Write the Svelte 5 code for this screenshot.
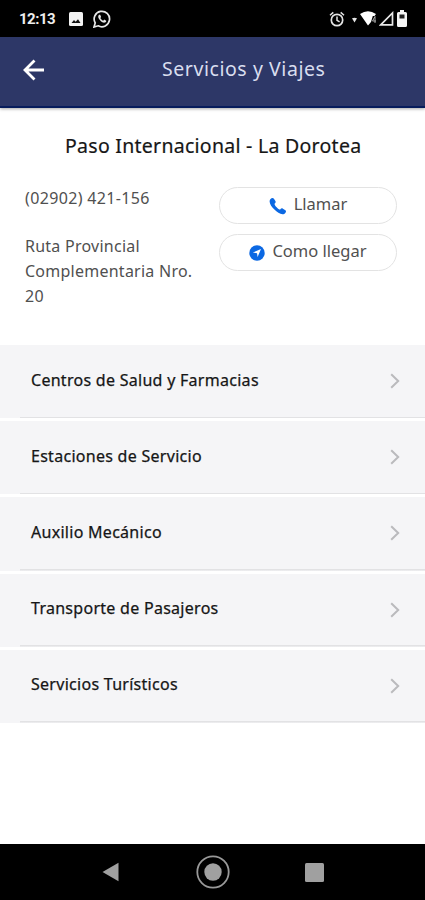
<script lang="ts">
  const services: string[] = [
    'Centros de Salud y Farmacias',
    'Estaciones de Servicio',
    'Auxilio Mecánico',
    'Transporte de Pasajeros',
    'Servicios Turísticos'
  ];
</script>

<div class="screen">
  <div class="status-bar">
    <span class="clock">12:13</span>
    <svg class="picture" width="14" height="14" viewBox="0 0 14 14" aria-hidden="true">
      <rect width="14" height="14" rx="1.5" fill="#f2f2f2" />
      <path d="M2.500 11 5 8 6.600 9.800 9 7.200 11.500 11Z" fill="#111" />
    </svg>
    <svg class="whatsapp" width="18" height="18" viewBox="0 0 18 18" aria-hidden="true">
      <path d="M1 17 2.200 12.900A7.700 7.700 0 1 1 5.200 15.800Z" fill="none" stroke="#e8e8e8" stroke-width="1.700" />
      <path d="M6.100 4.700c-1.400 1-1.100 3 .5 5s3.700 3.400 5.300 2.900c1.100-.4 1.500-1.200 1.300-1.900L11.200 9.600l-1 1.100C8.800 10.200 7.900 9.200 7.300 8l.8-1-.9-2.200Z" fill="#e8e8e8" />
    </svg>
    <div class="indicators">
      <svg width="16" height="16" viewBox="0 0 16 16" fill="none" stroke="#e4e4e4" aria-hidden="true">
        <circle cx="8" cy="9" r="5.700" stroke-width="1.700" />
        <path d="M1 4.200 4.300 1.400M15 4.200 11.700 1.400M8 5.500V9.300L10.600 10.900" stroke-width="1.500" />
      </svg>
      <svg class="small-signal" width="5" height="6" viewBox="0 0 6 6" aria-hidden="true">
        <path d="M0 1Q3-.5 6 1L3 6Z" fill="#e4e4e4" />
      </svg>
      <svg class="wifi" width="17" height="15" viewBox="0 0 17 15" aria-hidden="true">
        <path d="M0 3Q8-2.500 16 3L14.500 5H12.800L11 11 8 14.500Z" fill="#fff" />
        <path d="M15 5.500 12.500 10H16M15 5.500V12" fill="none" stroke="#aaa" />
      </svg>
      <svg class="cell" width="15" height="15" viewBox="0 0 15 15" aria-hidden="true">
        <path d="M1.700 13.800 13.500 2V13.800Z" fill="none" stroke="#e8e8e8" stroke-width="1.700" />
      </svg>
      <svg class="battery" width="10" height="17" viewBox="0 0 10 17" aria-hidden="true">
        <path d="M3 0H7V2H8.500Q10 2 10 3.500V15.500Q10 17 8.500 17H1.500Q0 17 0 15.500V3.500Q0 2 1.500 2H3Z" fill="#f5f5f5" />
        <path d="M2.500 4.500H7.500V8.500H2.500Z" fill="#222" />
      </svg>
    </div>
  </div>

  <header class="toolbar">
    <button type="button" class="back" aria-label="Volver">
      <svg width="22" height="22" viewBox="0 0 22 22" aria-hidden="true">
        <path d="M11.500 1.500 2 11 11.500 20.500M2 11H21" fill="none" stroke="#fff" stroke-width="2.800" />
      </svg>
    </button>
    <h1>Servicios y Viajes</h1>
  </header>

  <main>
    <h2>Paso Internacional - La Dorotea</h2>
    <section class="contact">
      <div class="details">
        <p class="phone">(02902) 421-156</p>
        <p class="address">Ruta Provincial<br />Complementaria Nro.<br />20</p>
      </div>
      <div class="actions">
        <button type="button" class="action">
          <svg width="18" height="18" viewBox="0 0 18 18" aria-hidden="true">
            <path d="M1.300 2.300C2.600.9 4 .5 4.900 1.700L6.400 4.100C7 5.200 6.500 6 5.500 6.700 5.500 8.600 9.400 12.500 11.200 12.500 12 11.500 12.900 11 13.900 11.700L16.400 13.300C17.500 14.200 17 15.500 15.500 16.700 12.800 18.500 8.500 15.700 5.400 12.600 2.300 9.500-.8 5 1.300 2.300Z" fill="#0b68e3" />
          </svg>
          <span>Llamar</span>
        </button>
        <button type="button" class="action">
          <svg width="16" height="16" viewBox="0 0 16 16" aria-hidden="true">
            <circle cx="8" cy="8" r="7.700" fill="#0b68e3" />
            <path d="M12 4 8.600 12 8 8.200 3.800 7.500Z" fill="#fff" />
          </svg>
          <span>Como llegar</span>
        </button>
      </div>
    </section>

    <ul class="services">
      {#each services as service}
        <li>
          <span>{service}</span>
          <svg width="10" height="16" viewBox="0 0 10 16" aria-hidden="true">
            <path d="M1.200 1.200 8.200 8 1.200 14.800" fill="none" stroke="#bababd" stroke-width="2" />
          </svg>
        </li>
      {/each}
    </ul>
  </main>

  <nav class="system-nav" aria-label="Sistema">
    <svg width="17" height="20" viewBox="0 0 17 20" aria-hidden="true">
      <path d="M.5 10 16.500.8V19.200Z" fill="#a0a0a0" />
    </svg>
    <svg class="home" width="34" height="34" viewBox="0 0 34 34" aria-hidden="true">
      <circle cx="17" cy="17" r="15.700" fill="none" stroke="#999" stroke-width="1.800" />
      <circle cx="17" cy="17" r="8.700" fill="#a0a0a0" />
    </svg>
    <svg class="recent" width="19" height="19" viewBox="0 0 19 19" aria-hidden="true">
      <rect width="19" height="19" rx="1.500" fill="#a0a0a0" />
    </svg>
  </nav>
</div>

<style>
  :global(body) {
    margin: 0;
    background: #fff;
  }

  .screen {
    display: flex;
    flex-direction: column;
    width: 425px;
    height: 900px;
    overflow: hidden;
    background: #fff;
    color: #161616;
    font-family: 'Noto Sans', sans-serif;
  }

  svg {
    display: block;
    flex-shrink: 0;
  }

  button {
    padding: 0;
    border: 0;
    background: none;
    font: inherit;
    color: inherit;
  }

  .status-bar {
    display: flex;
    align-items: center;
    box-sizing: border-box;
    height: 37px;
    padding: 0 18px 0 19px;
    background: #000;
    color: #eee;
  }

  .clock {
    width: 50px;
    font: 700 15px/20px Roboto, sans-serif;
    letter-spacing: -0.5px;
  }

  .whatsapp {
    margin-left: 10px;
  }

  .indicators {
    display: flex;
    align-items: center;
    margin-left: auto;
  }

  .small-signal {
    margin: 3px 3px 0 7px;
  }

  .cell {
    margin-left: 2px;
  }

  .battery {
    margin-left: 3px;
  }

  .toolbar {
    display: flex;
    align-items: center;
    flex-shrink: 0;
    box-sizing: border-box;
    height: 71px;
    padding: 0 0 4px 23px;
    border-bottom: 2px solid #071c5c;
    background: #2d3767;
    box-shadow: 0 1px 3px rgba(0, 0, 0, 0.35);
  }

  .back {
    width: 22px;
  }

  h1 {
    margin: 0 0 2px 117px;
    color: #d9deef;
    font-size: 19.5px;
    font-weight: 400;
    line-height: 28px;
    letter-spacing: 0.56px;
    white-space: nowrap;
  }

  main {
    flex: 1;
  }

  h2 {
    margin: 24px 0 0 65px;
    font-size: 19.5px;
    font-weight: 400;
    line-height: 28px;
    letter-spacing: 0.27px;
    white-space: nowrap;
    -webkit-text-stroke: 0.2px currentColor;
  }

  .contact {
    display: flex;
    justify-content: space-between;
    box-sizing: border-box;
    height: 185px;
    padding: 26px 28px 0 25px;
    color: #505050;
  }

  p {
    margin: 0;
    font-size: 16px;
    line-height: 25.3px;
    letter-spacing: 0.25px;
    white-space: nowrap;
  }

  .phone {
    letter-spacing: 0.35px;
  }

  .address {
    margin-top: 22.5px;
  }

  .actions {
    display: flex;
    flex-direction: column;
    gap: 10px;
    padding-top: 1px;
  }

  .action {
    display: flex;
    align-items: center;
    justify-content: center;
    gap: 7px;
    box-sizing: border-box;
    width: 178px;
    height: 37px;
    border: 1.5px solid #e3e3e3;
    border-radius: 19px;
    font-size: 16.5px;
    line-height: 24px;
  }

  .action span {
    margin-bottom: 3px;
  }

  .services {
    display: flex;
    flex-direction: column;
    gap: 3px;
    margin: 0;
    padding: 0;
    list-style: none;
  }

  .services li {
    display: flex;
    align-items: center;
    justify-content: space-between;
    box-sizing: border-box;
    height: 73.2px;
    padding: 0 25px 1px 31px;
    background: linear-gradient(#e2e2e4, #e2e2e4) 20px 100% / 100% 1.5px no-repeat, #f5f5f7;
    font-size: 16px;
    line-height: 24px;
    letter-spacing: 0.28px;
    -webkit-text-stroke: 0.25px currentColor;
  }

  .services span {
    margin-bottom: 3px;
  }

  .system-nav {
    display: flex;
    align-items: center;
    box-sizing: border-box;
    height: 56px;
    padding-left: 102px;
    background: #000;
  }

  .home {
    margin-left: 77px;
  }

  .recent {
    margin-left: 75px;
  }
</style>
